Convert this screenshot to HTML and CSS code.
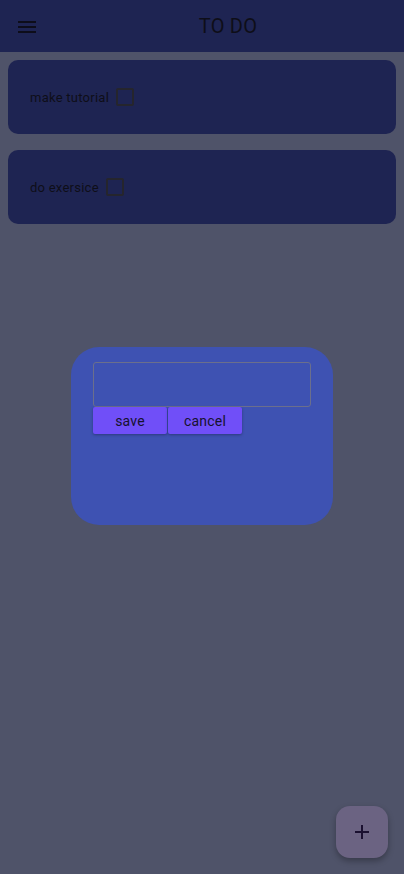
FILE: index.html
```html
<!DOCTYPE html>
<html lang="en">
<head>
    <meta charset="UTF-8">
    <meta name="viewport" content="width=device-width, initial-scale=1.0">
    <title>TO DO</title>
    <link rel="stylesheet" href="styles.css">
</head>
<body>
    <div class="app">
        <header class="topbar">
            <button class="menu-btn" aria-label="menu">
                <svg width="18" height="12" viewBox="0 0 18 12">
                    <rect x="0" y="0" width="18" height="2" fill="#0d0d1a"/>
                    <rect x="0" y="5" width="18" height="2" fill="#0d0d1a"/>
                    <rect x="0" y="10" width="18" height="2" fill="#0d0d1a"/>
                </svg>
            </button>
            <h1 class="title">TO DO</h1>
        </header>

        <main class="list">
            <div class="task">
                <span class="task-name">make tutorial</span>
                <span class="check"></span>
            </div>
            <div class="task">
                <span class="task-name">do exersice</span>
                <span class="check"></span>
            </div>
        </main>

        <!-- add task dialog -->
        <div class="dialog">
            <div class="field"></div>
            <div class="actions">
                <button class="btn">save</button>
                <button class="btn">cancel</button>
            </div>
        </div>

        <button class="fab" aria-label="add">
            <svg width="14" height="14" viewBox="0 0 14 14">
                <rect x="6" y="0" width="2" height="14" fill="#1a1030"/>
                <rect x="0" y="6" width="14" height="2" fill="#1a1030"/>
            </svg>
        </button>
    </div>
</body>
</html>
```

FILE: styles.css
```css
* {
    box-sizing: border-box;
}

body {
    margin: 0;
    font-family: Roboto, "Noto Sans", sans-serif;
    background-color: #4f5369;
}

.app {
    position: relative;
    height: 874px;
    overflow: hidden;
}

.topbar {
    height: 52px;
    background-color: #1e2452;
    display: flex;
    align-items: center;
    padding: 0 16px;
    position: relative;
}

.menu-btn {
    background: none;
    border: none;
    padding: 0;
    width: 22px;
    height: 22px;
    display: flex;
    align-items: center;
    justify-content: center;
    margin-top: 1px;
}

.title {
    position: absolute;
    left: 0;
    right: 0;
    margin: 0;
    text-align: center;
    font-size: 20px;
    font-weight: 400;
    letter-spacing: 0.2px;
    color: #0e0e18;
    padding-left: 52px;
    pointer-events: none;
}

.list {
    padding: 8px;
    display: flex;
    flex-direction: column;
    gap: 16px;
}

.task {
    height: 74px;
    background-color: #1e2452;
    border-radius: 10px;
    display: flex;
    align-items: center;
    padding-left: 22px;
    gap: 7px;
}

.task-name {
    font-size: 13px;
    letter-spacing: 0.25px;
    color: #0e0e18;
}

.check {
    flex-shrink: 0;
    width: 18px;
    height: 18px;
    border: 2px solid #25252d;
    border-radius: 2px;
}

.dialog {
    position: absolute;
    left: 71px;
    top: 347px;
    width: 262px;
    height: 178px;
    background-color: #3e52b2;
    border-radius: 28px;
    padding: 15px 22px;
}

.field {
    height: 45px;
    border: 1px solid #6b6f8c;
    border-radius: 3px;
}

.actions {
    display: flex;
    gap: 1px;
}

.btn {
    width: 74px;
    height: 27px;
    border: none;
    border-radius: 2px;
    background-color: #704ff8;
    color: #16122e;
    font-family: Roboto, sans-serif;
    font-size: 14px;
    letter-spacing: 0.2px;
    box-shadow: 0 1px 3px rgba(0, 0, 0, 0.3);
    padding: 0;
}

.fab {
    position: absolute;
    right: 16px;
    bottom: 16px;
    width: 52px;
    height: 52px;
    border: none;
    border-radius: 14px;
    background-color: #6b6382;
    box-shadow: 0 3px 6px rgba(0, 0, 0, 0.3);
    display: flex;
    align-items: center;
    justify-content: center;
}
```
